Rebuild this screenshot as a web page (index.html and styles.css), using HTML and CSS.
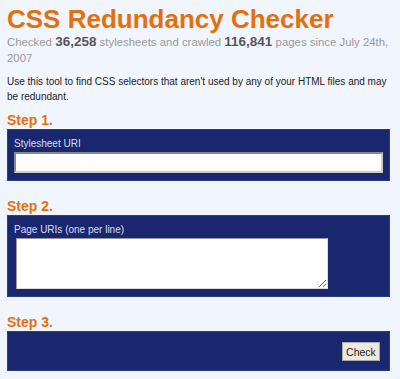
FILE: index.html
```html
<!DOCTYPE html>
<html lang="en">
<head>
    <meta charset="UTF-8">
    <title>CSS Redundancy Checker</title>
    <link rel="stylesheet" href="styles.css">
</head>
<body>
    <div class="container">
        <h1>CSS Redundancy Checker</h1>
        <p class="stats">Checked <strong>36,258</strong> stylesheets and crawled <strong>116,841</strong> pages since July 24th, 2007</p>
        <p class="intro">Use this tool to find CSS selectors that aren't used by any of your HTML files and may be redundant.</p>

        <form id="checkForm">
            <h2 class="first">Step 1.</h2>
            <div class="step">
                <label for="css">Stylesheet URI</label>
                <input type="text" id="css" name="css">
            </div>

            <h2>Step 2.</h2>
            <div class="step">
                <label for="pages">Page URIs (one per line)</label>
                <textarea id="pages" name="pages"></textarea>
            </div>

            <h2>Step 3.</h2>
            <div class="step submit">
                <button type="submit">Check</button>
            </div>
        </form>
    </div>
</body>
</html>
```

FILE: styles.css
```css
body {
    font-family: "Liberation Sans", Arial, sans-serif;
    background-color: #f1f5fd;
    margin: 0;
    padding: 0;
}

.container {
    width: 383px;
    padding: 4px 7px 0;
}

h1 {
    color: #e3700f;
    font-size: 26px;
    line-height: 30px;
    margin: 0;
}

.stats {
    color: #999;
    font-size: 11.4px;
    line-height: 16px;
    margin: 0;
}

.stats strong {
    color: #555;
    font-size: 13.5px;
}

.intro {
    color: #222;
    font-size: 10px;
    line-height: 15px;
    margin: 8px 0 0;
}

h2 {
    color: #e3700f;
    font-size: 14px;
    line-height: 17px;
    margin: 17px 0 0;
}

h2.first {
    margin-top: 8px;
}

.step {
    background-color: #18276e;
    border: 1px solid #2c3c85;
    padding: 6px 6px 7px;
}

label {
    display: block;
    color: #dde;
    font-size: 10px;
    line-height: 15px;
    margin-bottom: 1px;
}

input[type="text"] {
    display: block;
    box-sizing: border-box;
    width: 100%;
    height: 21px;
    border: 2px solid #8a8a8a;
    border-right-color: #ccc;
    border-bottom-color: #ccc;
    background: #fff;
    outline: none;
}

textarea {
    display: block;
    box-sizing: border-box;
    width: 312px;
    height: 51px;
    margin-left: 2px;
    border: 1px solid #999;
    border-right-color: #ddd;
    border-bottom-color: #ddd;
    background: #fff;
    outline: none;
}

.submit {
    display: flex;
    justify-content: flex-end;
    padding: 10px 9px 9px;
}

button {
    font-family: "Liberation Sans", Arial, sans-serif;
    font-size: 10.5px;
    color: #222;
    background-color: #ece9de;
    border: 1px solid #aaa;
    height: 19px;
    width: 38px;
    padding: 0;
    cursor: pointer;
}
```
